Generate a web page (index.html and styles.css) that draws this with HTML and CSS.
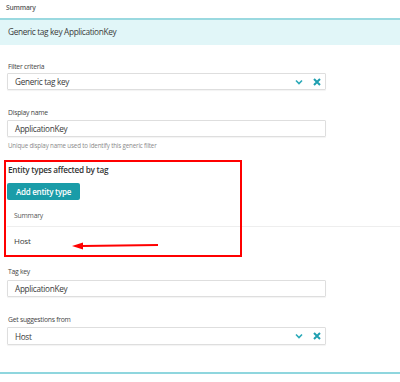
FILE: index.html
```html
<!DOCTYPE html>
<html>
<head>
<meta charset="utf-8">
<link rel="stylesheet" href="styles.css">
</head>
<body>
<div class="page">
  <div class="top-summary">Summary</div>
  <div class="band">Generic tag key ApplicationKey</div>
  <div class="form">
    <div class="field f-filter">
      <div class="label">Filter criteria</div>
      <div class="input select">
        <span>Generic tag key</span>
        <span class="icons">
          <svg class="chev" width="8" height="6" viewBox="0 0 8 6"><path d="M1 1.5 L4 4.5 L7 1.5" fill="none" stroke="#2aa9b8" stroke-width="1.6"/></svg>
          <svg class="xic" width="8" height="8" viewBox="0 0 8 8"><path d="M1 1 L7 7 M7 1 L1 7" fill="none" stroke="#1f9fb0" stroke-width="2"/></svg>
        </span>
      </div>
    </div>
    <div class="field f-display">
      <div class="label">Display name</div>
      <div class="input"><span>ApplicationKey</span></div>
      <div class="help">Unique display name used to identify this generic filter</div>
    </div>
    <div class="entity">
      <div class="entity-title">Entity types affected by tag</div>
      <button class="btn">Add entity type</button>
      <div class="sum-head">Summary</div>
      <div class="sum-row">Host</div>
      <div class="redbox"></div>
      <svg class="arrow" width="88" height="10" viewBox="0 0 88 10"><path d="M10 5 L86 4" stroke="#f00" stroke-width="2.2" fill="none"/><path d="M0 5 L11 1.5 L11 8.5 Z" fill="#f00"/></svg>
    </div>
    <div class="field f-tag">
      <div class="label">Tag key</div>
      <div class="input"><span>ApplicationKey</span></div>
    </div>
    <div class="field f-sugg">
      <div class="label">Get suggestions from</div>
      <div class="input select tall">
        <span>Host</span>
        <span class="icons">
          <svg class="chev" width="8" height="6" viewBox="0 0 8 6"><path d="M1 1.5 L4 4.5 L7 1.5" fill="none" stroke="#2aa9b8" stroke-width="1.6"/></svg>
          <svg class="xic" width="8" height="8" viewBox="0 0 8 8"><path d="M1 1 L7 7 M7 1 L1 7" fill="none" stroke="#1f9fb0" stroke-width="2"/></svg>
        </span>
      </div>
    </div>
  </div>
  <div class="bottom-line"></div>
</div>
</body>
</html>
```
FILE: styles.css
```css
* { box-sizing: border-box; }
html, body { margin: 0; padding: 0; background: #fff; }
body { font-family: "Open Sans", "Noto Sans", sans-serif; color: #3a3a3a; width: 400px; height: 382px; overflow: hidden; }
.page { position: relative; width: 400px; }
.top-summary { font-size: 6.7px; font-weight: 600; color: #5a5a5a; padding: 4px 0 0 6px; height: 18px; line-height: 8px; letter-spacing: -0.2px; }
.band { height: 27px; border-top: 2px solid #9ad9e0; background: #e1f6f8; font-size: 8.3px; letter-spacing: -0.35px; color: #3a3a3a; padding: 7px 0 0 8px; line-height: 10px; }
.form { padding: 0 0 0 7px; }
.field { width: 319px; }
.label { font-size: 6.8px; letter-spacing: -0.25px; color: #454545; padding-left: 1px; height: 8px; line-height: 8px; }
.f-filter { margin-top: 18px; }
.input { margin-top: 2px; height: 17px; border: 1px solid #dedede; border-radius: 1px; box-shadow: 0 1px 1px rgba(0,0,0,0.05); display: flex; align-items: center; font-size: 8.2px; letter-spacing: -0.3px; padding-left: 7px; color: #3a3a3a; }
.tall { height: 18px; margin-top: 3px; }
.select { justify-content: space-between; }
.icons { display: flex; align-items: center; gap: 10px; padding-right: 4px; }
.f-display { margin-top: 19px; }
.f-display .input { margin-top: 3px; }
.help { font-size: 6.2px; letter-spacing: -0.15px; color: #8a8a8a; margin-top: 5px; padding-left: 1px; line-height: 8px; height: 8px; }
.entity { position: relative; margin-left: -7px; margin-top: 10px; padding: 5px 0 0 7px; height: 97px; }
.entity-title { font-size: 8.2px; letter-spacing: -0.25px; font-weight: 600; color: #333; padding-left: 1px; line-height: 10px; height: 10px; }
.btn { display: block; margin-top: 8px; height: 17px; width: 73px; background: #1a9ca8; color: #fff; border: none; border-radius: 2px; font-family: inherit; font-size: 8px; letter-spacing: -0.25px; font-weight: 600; padding: 0; }
.sum-head { font-size: 6.8px; letter-spacing: -0.2px; color: #555; padding: 12px 0 0 7px; line-height: 8px; height: 27px; border-bottom: 1px solid #eee; }
.sum-row { font-size: 8px; letter-spacing: -0.2px; color: #3a3a3a; padding: 9px 0 0 7px; line-height: 10px; }
.redbox { position: absolute; left: 4px; top: 0; width: 238px; height: 97px; border: 2px solid #f00; }
.arrow { position: absolute; left: 72px; top: 81px; }
.f-tag { margin-top: 11px; }
.f-tag .input { margin-top: 4px; }
.f-sugg { margin-top: 19px; }
.bottom-line { position: absolute; left: 0; top: 372px; width: 400px; height: 1.5px; background: #8fd6de; }
```
